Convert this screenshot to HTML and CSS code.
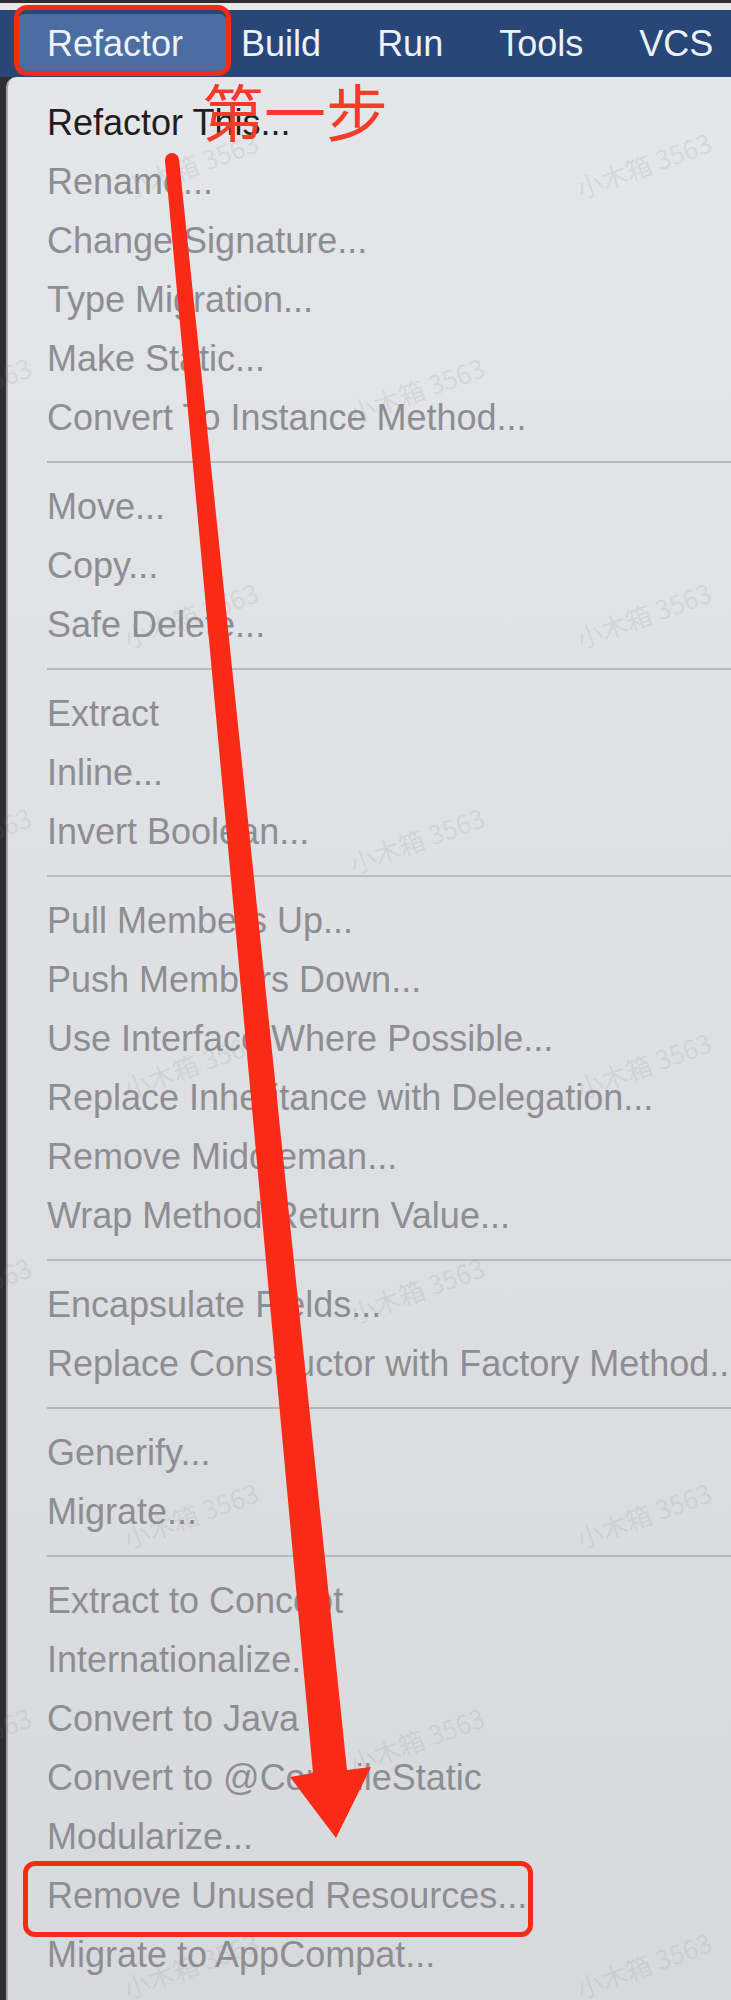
FILE: index.html
```html
<!DOCTYPE html>
<html lang="zh-CN">
<head>
  <meta charset="UTF-8">
  <title>Refactor Menu</title>
  <link rel="stylesheet" href="styles.css">
</head>
<body>
  <div class="menubar">
    <div class="menubar-item active">Refactor</div>
    <div class="menubar-item">Build</div>
    <div class="menubar-item">Run</div>
    <div class="menubar-item">Tools</div>
    <div class="menubar-item">VCS</div>
  </div>

  <div class="menu">
    <div class="menu-item enabled">Refactor This...</div>
    <div class="menu-item">Rename...</div>
    <div class="menu-item">Change Signature...</div>
    <div class="menu-item">Type Migration...</div>
    <div class="menu-item">Make Static...</div>
    <div class="menu-item">Convert To Instance Method...</div>
    <div class="menu-sep"></div>
    <div class="menu-item">Move...</div>
    <div class="menu-item">Copy...</div>
    <div class="menu-item">Safe Delete...</div>
    <div class="menu-sep"></div>
    <div class="menu-item">Extract</div>
    <div class="menu-item">Inline...</div>
    <div class="menu-item">Invert Boolean...</div>
    <div class="menu-sep"></div>
    <div class="menu-item">Pull Members Up...</div>
    <div class="menu-item">Push Members Down...</div>
    <div class="menu-item">Use Interface Where Possible...</div>
    <div class="menu-item">Replace Inheritance with Delegation...</div>
    <div class="menu-item">Remove Middleman...</div>
    <div class="menu-item">Wrap Method Return Value...</div>
    <div class="menu-sep"></div>
    <div class="menu-item">Encapsulate Fields...</div>
    <div class="menu-item">Replace Constructor with Factory Method...</div>
    <div class="menu-sep"></div>
    <div class="menu-item">Generify...</div>
    <div class="menu-item">Migrate...</div>
    <div class="menu-sep"></div>
    <div class="menu-item">Extract to Concept</div>
    <div class="menu-item">Internationalize...</div>
    <div class="menu-item">Convert to Java</div>
    <div class="menu-item">Convert to @CompileStatic</div>
    <div class="menu-item">Modularize...</div>
    <div class="menu-item marked">Remove Unused Resources...</div>
    <div class="menu-item">Migrate to AppCompat...</div>
  </div>

  <!-- 水印 -->
  <div class="watermarks">
    <div class="wm-row"><span>小木箱 3563</span><span>小木箱 3563</span><span>小木箱 3563</span></div>
    <div class="wm-row"><span>小木箱 3563</span><span>小木箱 3563</span><span>小木箱 3563</span></div>
    <div class="wm-row"><span>小木箱 3563</span><span>小木箱 3563</span><span>小木箱 3563</span></div>
    <div class="wm-row"><span>小木箱 3563</span><span>小木箱 3563</span><span>小木箱 3563</span></div>
    <div class="wm-row"><span>小木箱 3563</span><span>小木箱 3563</span><span>小木箱 3563</span></div>
    <div class="wm-row"><span>小木箱 3563</span><span>小木箱 3563</span><span>小木箱 3563</span></div>
    <div class="wm-row"><span>小木箱 3563</span><span>小木箱 3563</span><span>小木箱 3563</span></div>
    <div class="wm-row"><span>小木箱 3563</span><span>小木箱 3563</span><span>小木箱 3563</span></div>
    <div class="wm-row"><span>小木箱 3563</span><span>小木箱 3563</span><span>小木箱 3563</span></div>
  </div>

  <!-- 标注 -->
  <div class="step-label">第一步</div>
  <svg class="arrow" width="731" height="2000" viewBox="0 0 731 2000">
    <circle cx="172" cy="160" r="7" fill="#f92a16"/>
    <polygon points="165,160.7 179,159.3 347,1770 371,1767 336,1838 290,1777 313,1773" fill="#f92a16"/>
  </svg>
</body>
</html>
```

FILE: styles.css
```css
body {
  margin: 0;
  width: 731px;
  height: 2000px;
  overflow: hidden;
  position: relative;
  background: #2e2e30;
  font-family: 'Liberation Sans', Arial, sans-serif;
}

.menubar {
  margin-top: 3px;
  border-top: 7px solid #e7e8ea;
  height: 67px;
  background: #284677;
  display: flex;
  align-items: center;
  padding-left: 17px;
  white-space: nowrap;
}

.menubar-item {
  font-size: 36px;
  color: #eef2f8;
  height: 60px;
  line-height: 60px;
  padding: 0 28px;
}

.menubar-item.active {
  position: relative;
  padding: 0 44px 0 30px;
  background: #4b6da1;
  border-radius: 8px;
}

.menubar-item.active + .menubar-item {
  padding-left: 14px;
}

.menubar-item.active::after {
  content: "";
  position: absolute;
  top: -9px;
  left: -3px;
  right: -4px;
  bottom: -2px;
  border: 5px solid #f52a17;
  border-radius: 13px;
}

.menu {
  margin-left: 6px;
  border-left: 2px solid #a4a5a9;
  border-top-left-radius: 10px;
  background: linear-gradient(#e4e6ea, #d8d9dc);
  padding: 16px 0 20px;
}

.menu-item {
  position: relative;
  height: 59px;
  line-height: 59px;
  padding-left: 39px;
  font-size: 36px;
  color: #8d8e92;
  white-space: nowrap;
}

.menu-item.enabled {
  color: #1f1f21;
}

.menu-item.marked::after {
  content: "";
  position: absolute;
  top: -5px;
  left: 15px;
  width: 500px;
  height: 66px;
  border: 5px solid #f52a17;
  border-radius: 12px;
}

.menu-sep {
  height: 2px;
  margin: 14px 0 14px 39px;
  background: #b8b9bd;
}

/* 水印 */
.watermarks {
  position: absolute;
  top: 0;
  left: 0;
  width: 100%;
  height: 100%;
  padding-top: 52px;
  pointer-events: none;
}

.wm-row {
  display: flex;
  height: 225px;
  align-items: center;
  margin-left: -36px;
}

.wm-row:nth-child(even) {
  margin-left: -263px;
}

.wm-row span {
  flex: 0 0 453px;
  text-align: center;
  font-family: 'Noto Sans CJK SC', sans-serif;
  font-size: 26px;
  color: rgba(120, 124, 132, 0.15);
  transform: rotate(-20deg);
}

.step-label {
  position: absolute;
  top: 79px;
  left: 202px;
  font-family: 'Noto Sans CJK SC', sans-serif;
  font-weight: 400;
  font-size: 62px;
  line-height: 1;
  color: #f23b28;
}

.arrow {
  position: absolute;
  top: 0;
  left: 0;
  pointer-events: none;
}
```
